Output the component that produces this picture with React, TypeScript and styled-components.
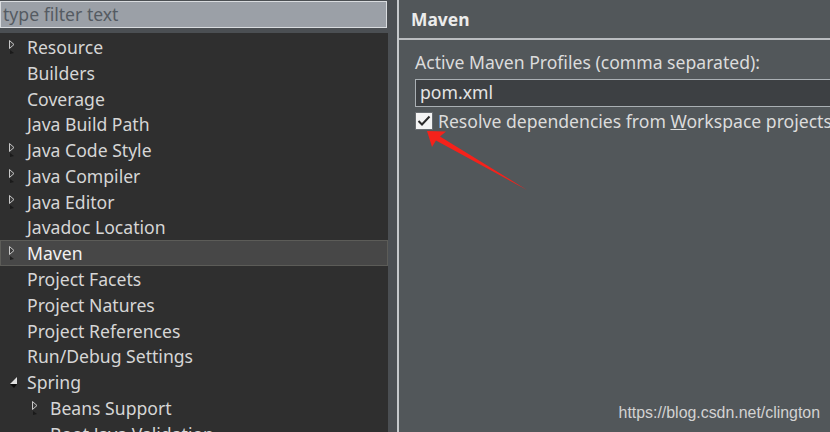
import React from "react";
import styled, { createGlobalStyle } from "styled-components";

const Global = createGlobalStyle`
  html, body { margin: 0; padding: 0; background: #4b4f53; }
  #root { width: 830px; height: 432px; overflow: hidden; }
`;

const Frame = styled.div`
  position: relative;
  width: 830px;
  height: 432px;
  display: flex;
  overflow: hidden;
  font-family: "Noto Sans", "Open Sans", sans-serif;
  background: #4b4f53;
`;

const LeftPane = styled.div`
  width: 388px;
  flex: none;
  display: flex;
  flex-direction: column;
  padding-top: 1px;
  gap: 5px;
`;

const Filter = styled.div`
  box-sizing: border-box;
  width: 387px;
  height: 27px;
  background: #9ba0a7;
  border: 1px solid #d9dcdf;
  color: #555b62;
  font-size: 17.6px;
  line-height: 25px;
  padding-left: 2px;
`;

const Tree = styled.div`
  flex: 1;
  background: #2f2f2f;
  padding-top: 1px;
`;

const Row = styled.div<{ $selected?: boolean; $depth: number }>`
  box-sizing: border-box;
  height: 25.8px;
  display: flex;
  align-items: center;
  padding-left: ${(p) => 7 + p.$depth * 23}px;
  color: ${(p) => (p.$selected ? "#f2f2f2" : "#d6d6d6")};
  background: ${(p) => (p.$selected ? "#474747" : "transparent")};
  border: 1px solid ${(p) => (p.$selected ? "#5c5c58" : "transparent")};
  font-size: 17.6px;
  white-space: nowrap;
`;

const Twisty = styled.span`
  width: 19px;
  height: 18px;
  flex: none;
  display: flex;
  align-items: center;
`;

const Sash = styled.div`
  width: 9px;
  flex: none;
  background: #4b4f53;
`;

const RightPane = styled.div`
  flex: 1;
  background: #52575a;
  border-left: 2px solid #c6c9cc;
  display: flex;
  flex-direction: column;
`;

const Header = styled.div`
  height: 38px;
  border-bottom: 2px solid #babdc0;
  display: flex;
  align-items: center;
  padding-left: 12px;
  color: #ececec;
  font-weight: 700;
  font-size: 17.4px;
`;

const Body = styled.div`
  display: flex;
  flex-direction: column;
  padding-left: 16px;
  padding-top: 9px;
  color: #dcdcdc;
  font-size: 17.6px;
  white-space: nowrap;
`;

const Label = styled.div`
  height: 26px;
  line-height: 26px;
`;

const TextField = styled.div`
  box-sizing: border-box;
  margin-top: 4px;
  height: 28px;
  width: 440px;
  background: #3d4043;
  border: 1px solid #aab0b4;
  padding-left: 4px;
  line-height: 25px;
  color: #e4e4e4;
`;

const CheckRow = styled.div`
  margin-top: 4px;
  display: flex;
  align-items: center;
  gap: 5px;
  height: 20px;
`;

const Box = styled.span`
  box-sizing: border-box;
  width: 18px;
  height: 18px;
  flex: none;
  background: #f4f4f4;
  border: 1px solid #6a6e72;
  display: flex;
  align-items: center;
  justify-content: center;
`;

const U = styled.span`
  text-decoration: underline;
`;

const Watermark = styled.div`
  position: absolute;
  right: 10px;
  bottom: 10px;
  font-family: "Liberation Sans", Arial, sans-serif;
  font-size: 15.9px;
  color: #d2d2d2;
`;

const Overlay = styled.svg`
  position: absolute;
  left: 0;
  top: 0;
  pointer-events: none;
`;

const Collapsed = () => (
  <svg width="8" height="16" viewBox="0 0 8 16">
    <path d="M1.5 1.5 L6 5.5 L1.5 9.5 Z" fill="#3a3a3a" stroke="#c8c8c8" strokeWidth="1" />
    <path d="M2 11 L6 14 L2 15 Z" fill="#111" opacity="0.7" />
  </svg>
);

const Expanded = () => (
  <svg width="12" height="16" viewBox="0 0 12 16">
    <path d="M9 3 L9 10 L2 10 Z" fill="#e0e0e0" />
    <path d="M2 10 L9 10 L6 14 Z" fill="#0d0d0d" />
  </svg>
);

type Item = { label: string; depth: number; kind?: "c" | "e"; selected?: boolean };

const items: Item[] = [
  { label: "Resource", depth: 0, kind: "c" },
  { label: "Builders", depth: 0 },
  { label: "Coverage", depth: 0 },
  { label: "Java Build Path", depth: 0 },
  { label: "Java Code Style", depth: 0, kind: "c" },
  { label: "Java Compiler", depth: 0, kind: "c" },
  { label: "Java Editor", depth: 0, kind: "c" },
  { label: "Javadoc Location", depth: 0 },
  { label: "Maven", depth: 0, kind: "c", selected: true },
  { label: "Project Facets", depth: 0 },
  { label: "Project Natures", depth: 0 },
  { label: "Project References", depth: 0 },
  { label: "Run/Debug Settings", depth: 0 },
  { label: "Spring", depth: 0, kind: "e" },
  { label: "Beans Support", depth: 1, kind: "c" },
  { label: "Boot Java Validation", depth: 1 },
];

export default function App() {
  return (
    <>
      <Global />
      <Frame>
        <LeftPane>
          <Filter>type filter text</Filter>
          <Tree>
            {items.map((it) => (
              <Row key={it.label} $depth={it.depth} $selected={it.selected}>
                <Twisty>{it.kind === "c" ? <Collapsed /> : it.kind === "e" ? <Expanded /> : null}</Twisty>
                {it.label}
              </Row>
            ))}
          </Tree>
        </LeftPane>
        <Sash />
        <RightPane>
          <Header>Maven</Header>
          <Body>
            <Label>Active Maven Profiles (comma separated):</Label>
            <TextField>pom.xml</TextField>
            <CheckRow>
              <Box>
                <svg width="14" height="12" viewBox="0 0 14 12">
                  <path d="M1.5 6 L5 9.5 L12.5 1.5" fill="none" stroke="#2a2a2a" strokeWidth="2" />
                </svg>
              </Box>
              <span>
                Resolve dependencies from <U>W</U>orkspace projects
              </span>
            </CheckRow>
          </Body>
        </RightPane>
        <Watermark>https://blog.csdn.net/clington</Watermark>
        <Overlay width="830" height="432" viewBox="0 0 830 432">
          <polygon
            points="427,131 446,131.5 440,136.5 527,190 436,140.5 432,147"
            fill="#f5221b"
          />
        </Overlay>
      </Frame>
    </>
  );
}
